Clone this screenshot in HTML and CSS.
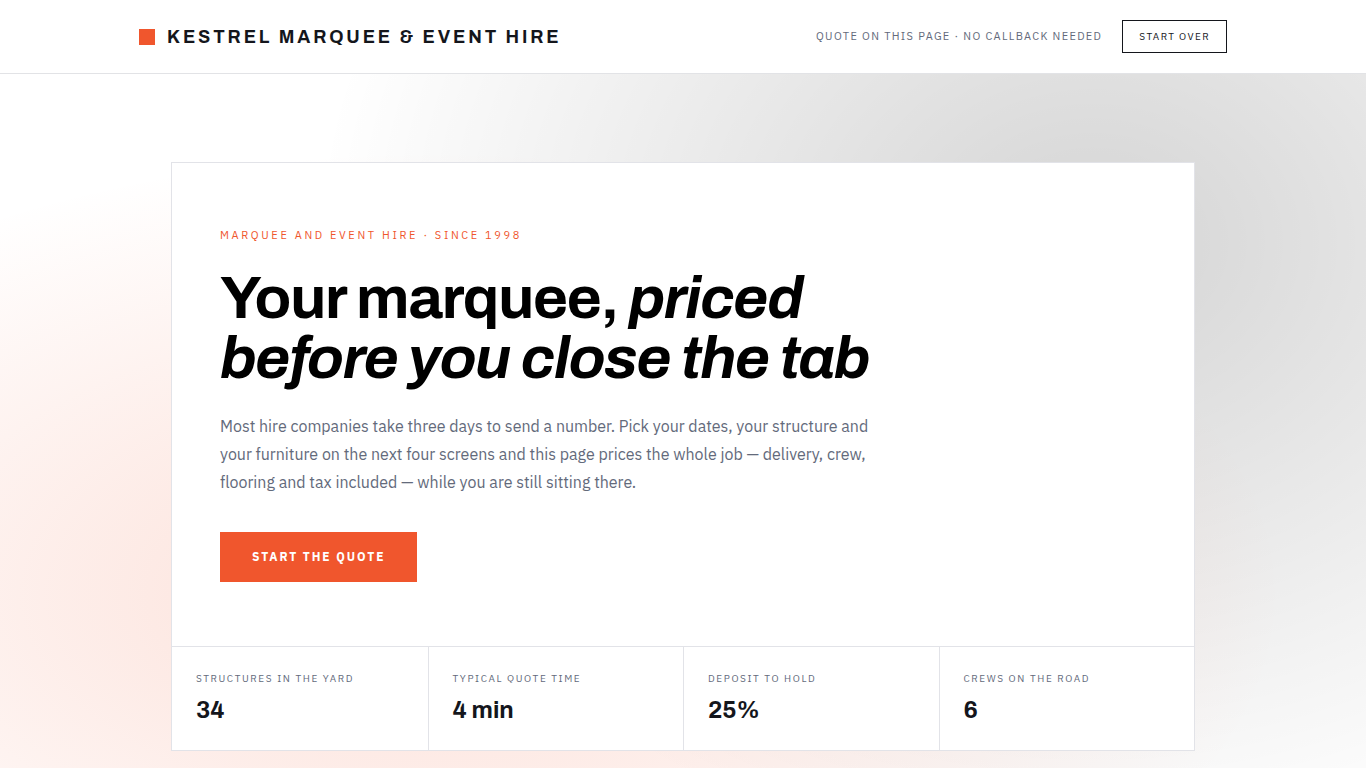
FILE: index.html
```html
<!DOCTYPE html>
<html lang="en">
<head>
    <meta charset="UTF-8">
    <meta name="viewport" content="width=device-width, initial-scale=1.0">
    <title>Kestrel Marquee &amp; Event Hire</title>
    <link rel="stylesheet" href="styles.css">
</head>
<body>
    <header class="site-header">
        <div class="header-inner">
            <a class="brand" href="#">
                <span class="brand-mark"></span>
                Kestrel Marquee &amp; Event Hire
            </a>
            <div class="header-side">
                <span class="header-note">Quote on this page · No callback needed</span>
                <button type="button" class="btn-outline">Start over</button>
            </div>
        </div>
    </header>

    <main class="hero">
        <section class="card">
            <div class="intro">
                <p class="eyebrow">Marquee and event hire · Since 1998</p>
                <h1>Your marquee, <em>priced<br>before you close the tab</em></h1>
                <p class="lead">Most hire companies take three days to send a number. Pick your dates, your structure and your furniture on the next four screens and this page prices the whole job — delivery, crew, flooring and tax included — while you are still sitting there.</p>
                <button type="button" class="btn-primary">Start the quote</button>
            </div>
            <dl class="stats">
                <div class="stat">
                    <dt>Structures in the yard</dt>
                    <dd>34</dd>
                </div>
                <div class="stat">
                    <dt>Typical quote time</dt>
                    <dd>4 min</dd>
                </div>
                <div class="stat">
                    <dt>Deposit to hold</dt>
                    <dd>25%</dd>
                </div>
                <div class="stat">
                    <dt>Crews on the road</dt>
                    <dd>6</dd>
                </div>
            </dl>
        </section>
    </main>
</body>
</html>
```
FILE: styles.css
```css
* {
    box-sizing: border-box;
    margin: 0;
    padding: 0;
}
html {
    scrollbar-width: none;
}
body {
    font-family: "IBM Plex Sans", Roboto, sans-serif;
    color: #14161c;
    background: #fff;
}
button {
    font-family: inherit;
    text-transform: uppercase;
    cursor: pointer;
}

/* header */
.site-header {
    background: #fff;
    border-bottom: 1px solid #e2e3e6;
}
.header-inner {
    max-width: 1152px;
    margin: 0 auto;
    padding: 20px 32px;
    display: flex;
    align-items: center;
    justify-content: space-between;
}
.brand {
    display: flex;
    align-items: center;
    gap: 12px;
    font-family: Archivo, "Liberation Sans", sans-serif;
    font-size: 18px;
    font-weight: 700;
    letter-spacing: 0.16em;
    text-transform: uppercase;
    text-decoration: none;
    color: inherit;
}
.brand-mark {
    width: 16px;
    height: 16px;
    background: #f0562d;
}
.header-side {
    display: flex;
    align-items: center;
    gap: 20px;
}
.header-note {
    font-size: 11px;
    line-height: 17px;
    letter-spacing: 0.12em;
    text-transform: uppercase;
    color: #636a7b;
}
.btn-outline {
    padding: 0 16px;
    font-size: 10px;
    line-height: 31px;
    letter-spacing: 0.14em;
    color: #14161c;
    background: #fff;
    border: 1px solid #14161c;
}

/* hero */
.hero {
    padding: 88px 32px;
    background:
        radial-gradient(62% 58% at 32% 68%, rgba(240, 86, 45, 0.19), transparent),
        radial-gradient(57% 82% at 80% 22%, rgba(0, 0, 0, 0.17), transparent),
        #fff;
}
.card {
    max-width: 1024px;
    margin: 0 auto;
    background: #fff;
    border: 1px solid #e2e3e8;
}
.intro {
    padding: 64px 48px;
}
.eyebrow {
    font-size: 11px;
    line-height: 17px;
    letter-spacing: 0.24em;
    text-transform: uppercase;
    color: #f0562d;
}
h1 {
    margin-top: 24px;
    font-family: Archivo, "Liberation Sans", sans-serif;
    font-size: 60px;
    font-weight: 700;
    line-height: 60px;
    letter-spacing: -0.02em;
    color: #000;
}
.lead {
    max-width: 672px;
    margin-top: 24px;
    font-size: 16px;
    line-height: 28px;
    color: #636a7b;
}
.btn-primary {
    margin-top: 36px;
    padding: 0 32px;
    font-size: 12px;
    font-weight: 700;
    line-height: 50px;
    letter-spacing: 0.16em;
    color: #fff;
    background: #f0562d;
    border: 0;
}

/* stats */
.stats {
    display: grid;
    grid-template-columns: repeat(4, 1fr);
    border-top: 1px solid #e2e3e8;
}
.stat {
    padding: 24px;
}
.stat + .stat {
    border-left: 1px solid #e2e3e8;
}
.stat dt {
    font-size: 10px;
    line-height: 15px;
    letter-spacing: 0.16em;
    text-transform: uppercase;
    color: #636a7b;
}
.stat dd {
    margin-top: 8px;
    font-family: Archivo, "Liberation Sans", sans-serif;
    font-size: 24px;
    font-weight: 700;
    line-height: 32px;
}
```
